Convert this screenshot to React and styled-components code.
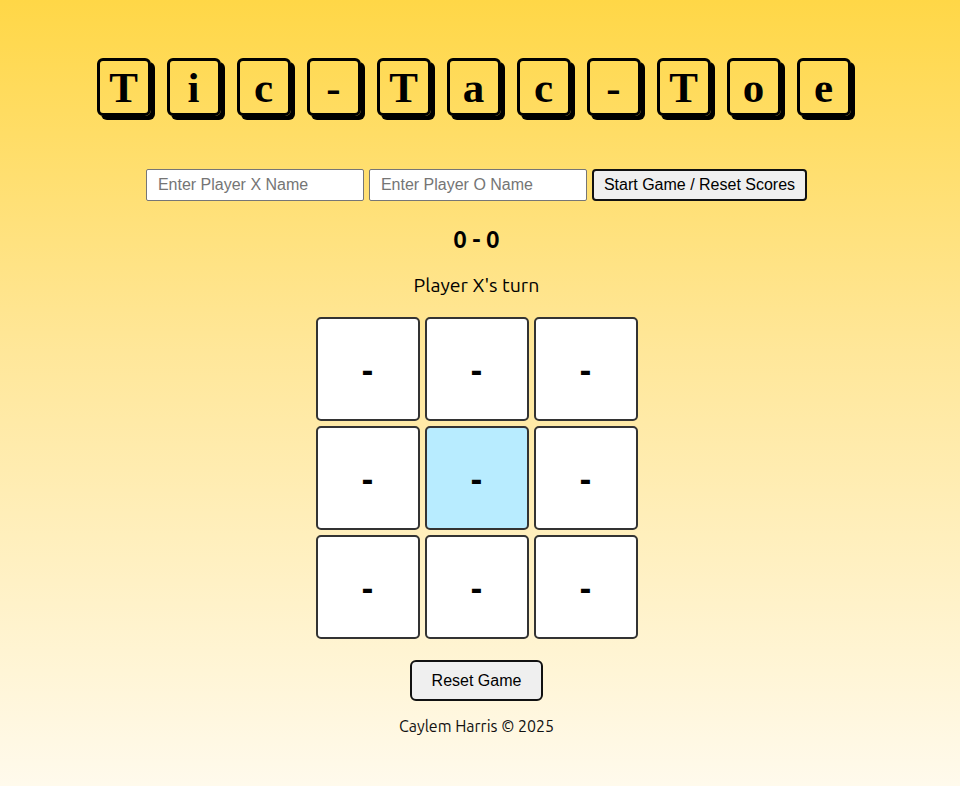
import React, { useState } from "react";
import styled, { createGlobalStyle } from "styled-components";

const GlobalStyle = createGlobalStyle`
  html, body {
    margin: 0;
    min-height: 100%;
  }
  body {
    background: linear-gradient(180deg, #ffd747 0%, #ffe79a 45%, #fffaec 100%);
    min-height: 786px;
    font-family: "Ubuntu", "Noto Sans", sans-serif;
  }
`;

const Page = styled.main`
  display: flex;
  flex-direction: column;
  align-items: center;
  padding: 58px 7px 40px 0;
`;

const Title = styled.h1`
  display: flex;
  gap: 16px;
  margin: 0 0 0 -6px;
`;

const Tile = styled.span`
  display: flex;
  align-items: center;
  justify-content: center;
  width: 48px;
  height: 52px;
  border: 3px solid #000;
  border-radius: 6px;
  box-shadow: 4px 4px 0 #000;
  font-family: "Liberation Serif", "DejaVu Serif", serif;
  font-weight: bold;
  font-size: 43px;
  line-height: 1;
  color: #000;
`;

const Form = styled.div`
  display: flex;
  gap: 5px;
  margin-top: 53px;
`;

const NameInput = styled.input`
  box-sizing: border-box;
  width: 218px;
  height: 32px;
  padding: 0 11px;
  border: 1px solid #767676;
  border-radius: 2px;
  font-family: "Liberation Sans", Arial, sans-serif;
  font-size: 16px;
  background: #fff;
  &::placeholder {
    color: #757575;
  }
`;

const Button = styled.button`
  box-sizing: border-box;
  height: ${(p) => p.$h || 32}px;
  padding: 0 ${(p) => p.$px || 10}px;
  border: 2px solid #111;
  border-radius: ${(p) => p.$r || 4}px;
  background: #efefef;
  font-family: "Liberation Sans", Arial, sans-serif;
  font-size: 16px;
  color: #000;
  cursor: pointer;
`;

const Score = styled.div`
  margin-top: 25px;
  font-size: 24px;
  font-weight: bold;
  color: #000;
`;

const Turn = styled.div`
  margin-top: 21px;
  font-size: 19.5px;
  color: #000;
`;

const Board = styled.div`
  display: grid;
  grid-template-columns: repeat(3, 104px);
  grid-auto-rows: 104px;
  gap: 5px;
  margin-top: 21px;
`;

const Cell = styled.button`
  box-sizing: border-box;
  display: flex;
  align-items: center;
  justify-content: center;
  border: 2px solid #333;
  border-radius: 5px;
  background: ${(p) => (p.$active ? "#b8ecff" : "#fff")};
  font-family: "Noto Sans", sans-serif;
  font-size: 34px;
  font-weight: bold;
  color: #000;
  padding: 0;
  cursor: pointer;
`;

const ResetRow = styled.div`
  margin-top: 21px;
`;

const Footer = styled.footer`
  margin-top: 16px;
  font-size: 16px;
  color: #111;
`;

const letters = ["T", "i", "c", "-", "T", "a", "c", "-", "T", "o", "e"];

export default function App() {
  const [cells] = useState(Array(9).fill("-"));
  return (
    <>
      <GlobalStyle />
      <Page>
        <Title>
          {letters.map((l, i) => (
            <Tile key={i}>{l}</Tile>
          ))}
        </Title>
        <Form>
          <NameInput placeholder="Enter Player X Name" />
          <NameInput placeholder="Enter Player O Name" />
          <Button $px={10}>Start Game / Reset Scores</Button>
        </Form>
        <Score>0 - 0</Score>
        <Turn>Player X's turn</Turn>
        <Board>
          {cells.map((c, i) => (
            <Cell key={i} $active={i === 4}>
              {c}
            </Cell>
          ))}
        </Board>
        <ResetRow>
          <Button $h={41} $px={20} $r={6}>
            Reset Game
          </Button>
        </ResetRow>
        <Footer>Caylem Harris © 2025</Footer>
      </Page>
    </>
  );
}
